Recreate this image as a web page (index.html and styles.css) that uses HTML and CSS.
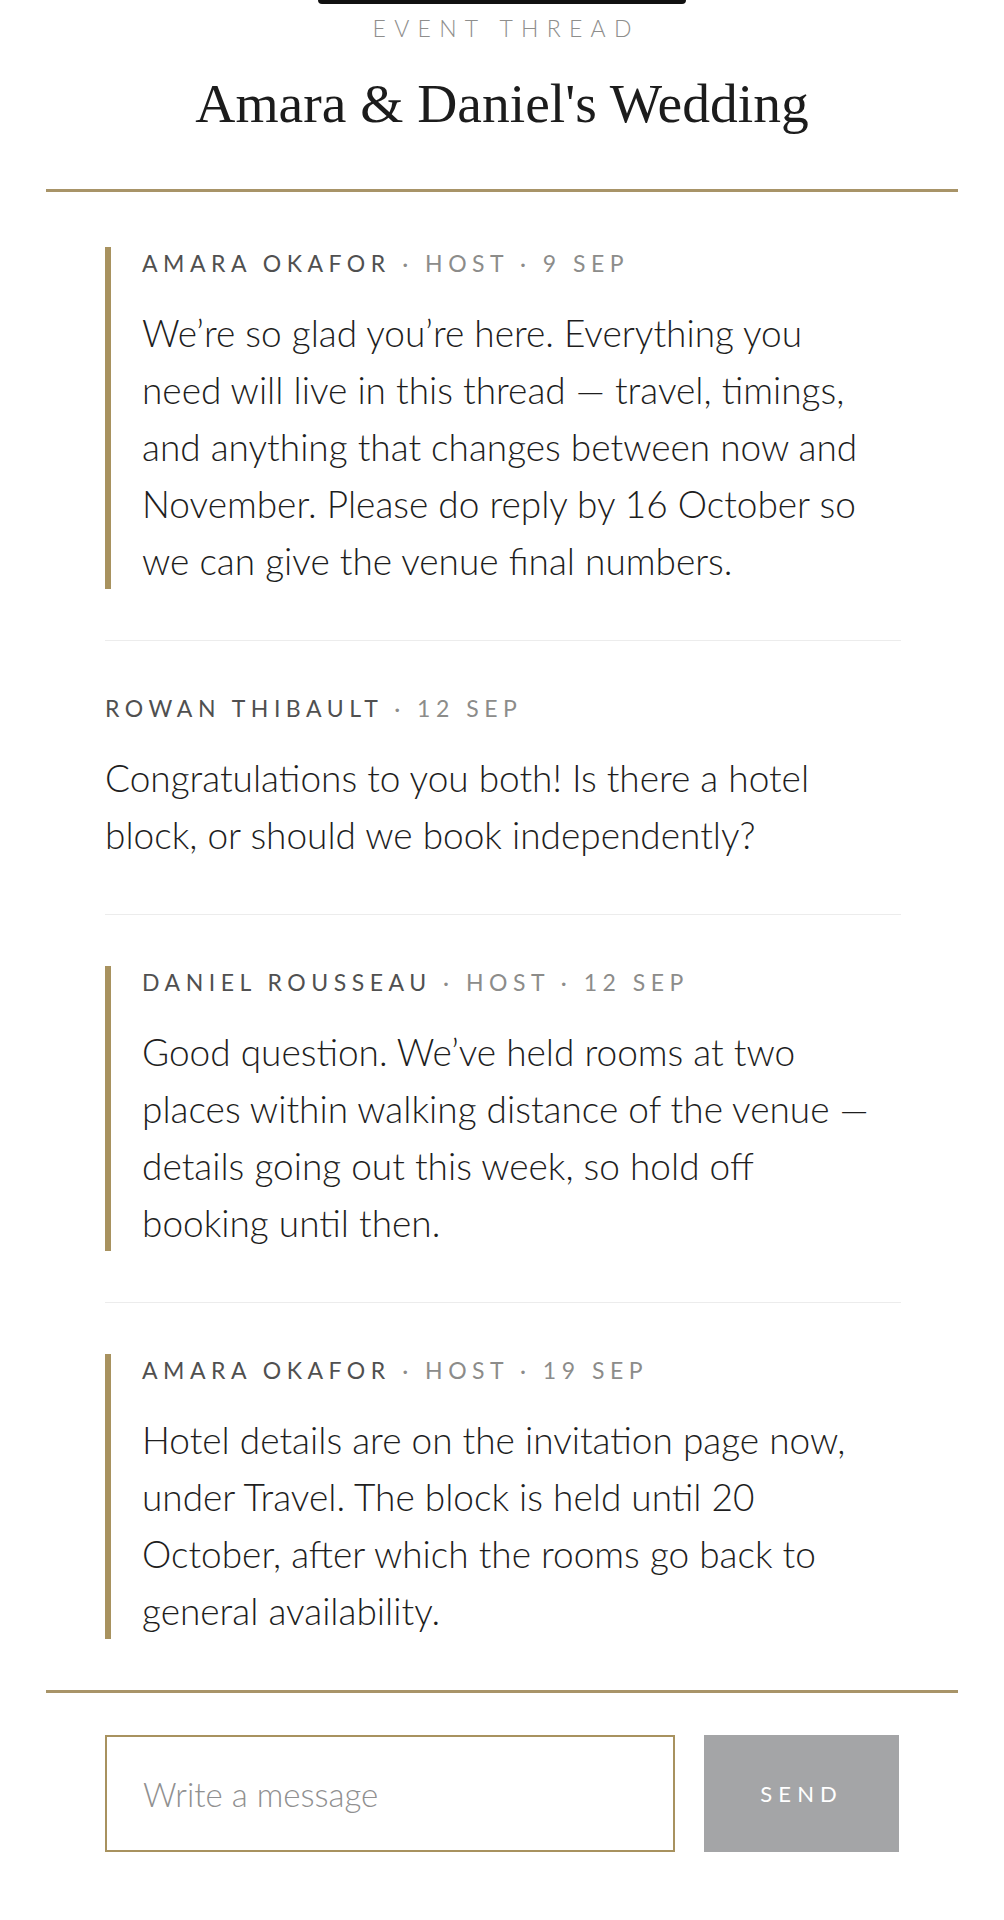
FILE: index.html
```
<!DOCTYPE html>
<html lang="en">
<head>
<meta charset="utf-8">
<title>Amara &amp; Daniel's Wedding — Event thread</title>
<link rel="stylesheet" href="styles.css">
</head>
<body>
<div class="page">
  <div class="notch"></div>
  <header class="head">
    <div class="eyebrow">Event thread</div>
    <h1 class="title">Amara &amp; Daniel's Wedding</h1>
  </header>
  <main class="thread">
    <article class="msg host">
      <div class="meta"><span class="author">Amara Okafor</span> · Host · 9 Sep</div>
      <p class="body">We’re so glad you’re here. Everything you need will live in this thread — travel, timings, and anything that changes between now and November. Please do reply by 16 October so we can give the venue final numbers.</p>
    </article>
    <article class="msg">
      <div class="meta"><span class="author">Rowan Thibault</span> · 12 Sep</div>
      <p class="body">Congratulations to you both! Is there a hotel block, or should we book independently?</p>
    </article>
    <article class="msg host">
      <div class="meta"><span class="author">Daniel Rousseau</span> · Host · 12 Sep</div>
      <p class="body">Good question. We’ve held rooms at two places within walking distance of the venue — details going out this week, so hold off booking until then.</p>
    </article>
    <article class="msg host">
      <div class="meta"><span class="author">Amara Okafor</span> · Host · 19 Sep</div>
      <p class="body">Hotel details are on the invitation page now, under Travel. The block is held until 20 October, after which the rooms go back to general availability.</p>
    </article>
  </main>
  <form class="composer" onsubmit="return false">
    <input class="field" type="text" placeholder="Write a message">
    <button class="send" type="submit">Send</button>
  </form>
</div>
</body>
</html>
```
FILE: styles.css
```
* { box-sizing: border-box; }
html, body { margin: 0; padding: 0; background: #ffffff; }
body { font-family: "Lato", "Noto Sans", sans-serif; color: #222; }

.page {
  width: 1004px;
  min-height: 1920px;
  display: flex;
  flex-direction: column;
  align-items: center;
}

.notch {
  width: 368px;
  height: 4px;
  background: #111;
  border-radius: 0 0 16px 16px;
}

.head {
  width: 912px;
  display: flex;
  flex-direction: column;
  align-items: center;
  border-bottom: 3px solid #a89468;
  padding-bottom: 55px;
}

.eyebrow {
  margin-top: 10px;
  font-size: 23px;
  line-height: 28px;
  font-weight: 300;
  letter-spacing: 0.36em;
  text-transform: uppercase;
  color: #8e8e8c;
  padding-left: 0.36em;
}

.title {
  margin: 32px 0 0 0;
  font-family: "Liberation Serif", "DejaVu Serif", serif;
  font-weight: 400;
  font-size: 55.5px;
  line-height: 60px;
  color: #1c1c1c;
}

.thread {
  width: 912px;
  padding: 4px 57px 0 59px;
  border-bottom: 3px solid #a89468;
}

.msg {
  padding: 51px 0;
  border-bottom: 1px solid #ececec;
}
.msg:last-child { border-bottom: none; }

.msg.host .meta, .msg.host .body {
  border-left: 6px solid #a8925f;
  padding-left: 31px;
}

.meta {
  font-size: 23px;
  line-height: 32px;
  letter-spacing: 0.24em;
  text-transform: uppercase;
  color: #8c8c8a;
  font-weight: 400;
  padding-bottom: 25px;
}
.author { color: #505050; }

.body {
  margin: 0;
  font-size: 37px;
  line-height: 57px;
  font-weight: 300;
  color: #1e1e1e;
  padding-right: 22px;
}

.composer {
  width: 794px;
  margin-top: 42px;
  display: flex;
  gap: 29px;
}

.field {
  flex: 1;
  height: 117px;
  border: 2px solid #a8925f;
  border-radius: 0;
  padding: 0 36px;
  font-family: "Lato", "Noto Sans", sans-serif;
  font-size: 33px;
  font-weight: 300;
  color: #222;
  background: #fff;
  outline: none;
}
.field::placeholder { color: #909090; }

.send {
  width: 195px;
  height: 117px;
  border: none;
  background: #a4a5a7;
  color: #ffffff;
  font-family: "Lato", "Noto Sans", sans-serif;
  font-size: 22px;
  letter-spacing: 0.28em;
  text-transform: uppercase;
  padding-left: 0.28em;
}
```
